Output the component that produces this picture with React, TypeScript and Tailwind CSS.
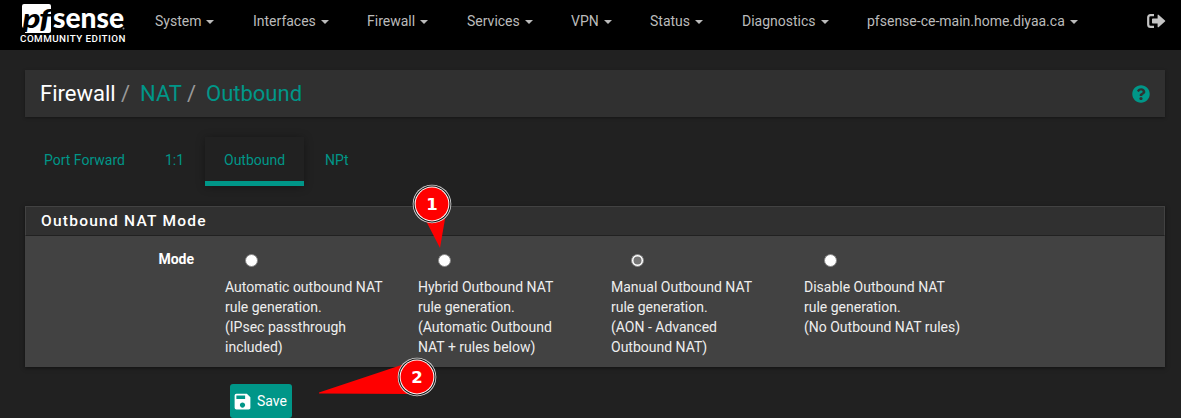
import { FaQuestionCircle } from "react-icons/fa";
import { MdSave } from "react-icons/md";

const menu = [
  { label: "System", width: "w-[98px]" },
  { label: "Interfaces", width: "w-[114px]" },
  { label: "Firewall", width: "w-[100px]" },
  { label: "Services", width: "w-[104px]" },
  { label: "VPN", width: "w-[79px]" },
  { label: "Status", width: "w-[92px]" },
  { label: "Diagnostics", width: "w-[125px]" },
  { label: "pfsense-ce-main.home.diyaa.ca", width: "w-[230px]" },
];

const modes = [
  { lines: ["Automatic outbound NAT", "rule generation.", "(IPsec passthrough", "included)"], checked: false },
  { lines: ["Hybrid Outbound NAT", "rule generation.", "(Automatic Outbound", "NAT + rules below)"], checked: false },
  { lines: ["Manual Outbound NAT", "rule generation.", "(AON - Advanced", "Outbound NAT)"], checked: true },
  { lines: ["Disable Outbound NAT", "rule generation.", "(No Outbound NAT rules)"], checked: false },
];

function Logo() {
  return (
    <svg width="115" height="50" viewBox="0 0 115 50" className="shrink-0">
      <path d="M4 4H29Q31 4 31 6V31Q31 33 29 33H5L6 28H4Q2 28 2 26V6Q2 4 4 4Z" fill="#fff" />
      <text x="2.5" y="27.5" fontFamily="Lato, sans-serif" fontWeight="900" fontStyle="italic" fontSize="27" textLength="18" lengthAdjust="spacingAndGlyphs" fill="#000">p</text>
      <text x="19" y="27.5" fontFamily="Lato, sans-serif" fontWeight="900" fontStyle="italic" fontSize="27" textLength="12" lengthAdjust="spacingAndGlyphs" fill="#000">f</text>
      <text x="33" y="27.5" fontFamily="Lato, sans-serif" fontWeight="900" fontSize="28" textLength="71" lengthAdjust="spacingAndGlyphs" fill="#fff">sense</text>
      <circle cx="103.5" cy="28.5" r="1" fill="#888" />
      <text x="0" y="42" fontFamily="Roboto, sans-serif" fontWeight="500" fontSize="9.8" textLength="105.5" fill="#fff">COMMUNITY EDITION</text>
    </svg>
  );
}

function Radio({ checked }: { checked: boolean }) {
  return (
    <svg width="13" height="13" viewBox="0 0 13 13" className="ml-5 block">
      <circle cx="6.5" cy="6.5" r="6" fill="#fff" stroke="#858585" />
      {checked && <circle cx="6.5" cy="6.5" r="4" fill="#757575" />}
    </svg>
  );
}

function Marker({ n }: { n: number }) {
  return (
    <g>
      <circle cx="20" cy="20" r="19.3" fill="#ddd" />
      <circle cx="20" cy="20" r="18.5" fill="#111" />
      <circle cx="20" cy="20" r="17.4" fill="#fff" />
      <circle cx="20" cy="20" r="16.4" fill="#f00" />
      <text x="20" y="26" textAnchor="middle" fontFamily="DejaVu Sans, sans-serif" fontWeight="bold" fontSize="16.5" fill="#fff">{n}</text>
    </g>
  );
}

export default function App() {
  return (
    <div className="relative h-[418px] w-[1181px] overflow-hidden bg-[#212121] font-['Roboto',sans-serif] text-[14px] leading-5 text-[#eee]">
      <nav className="flex h-[50px] bg-black pl-5 text-[#bbb]">
        <Logo />
        <div className="ml-5 flex pt-[11px]">
          {menu.map((m) => (
            <div key={m.label} className={`${m.width} flex shrink-0 whitespace-nowrap`}>
              {m.label}
              <svg width="8" height="4" viewBox="0 0 8 4" className="ml-[5px] mt-[9px]">
                <path d="M0 0H8L4 4Z" fill="currentColor" />
              </svg>
            </div>
          ))}
        </div>
        <svg width="19" height="14" viewBox="0 0 19 14" className="ml-auto mr-[15px] mt-[14px]">
          <path d="M7 1.2H3.6Q1.2 1.2 1.2 3.6V10.4Q1.2 12.8 3.6 12.8H7" fill="none" stroke="#c4c4c4" strokeWidth="2.2" />
          <path d="M5 5.2Q5 4.4 5.8 4.4H10.6V1.4Q10.6 0 11.8 1L18 6.4Q18.6 7 18 7.6L11.8 13Q10.6 14 10.6 12.6V9.6H5.8Q5 9.6 5 8.8Z" fill="#c4c4c4" />
        </svg>
      </nav>

      <header className="ml-[25px] mt-5 flex h-[47px] w-[1140px] items-center bg-[#303030] pl-[15px] pr-[15px] text-[22px] shadow-[0_1px_3px_rgba(0,0,0,0.35)]">
        <span className="w-[81px] text-white">Firewall</span>
        <span className="w-[19px] text-[#999]">/</span>
        <span className="w-[47px] text-[#009688]">NAT</span>
        <span className="w-[19px] text-[#999]">/</span>
        <span className="text-[#009688]">Outbound</span>
        <FaQuestionCircle className="ml-auto mt-px text-[18px] text-[#009688]" />
      </header>

      <div className="ml-[25px] mt-[20px] flex h-[49px] text-[#009688]">
        <a className="w-[121px] pl-[19px] pt-[13px]">Port Forward</a>
        <a className="w-[59px] pl-[19px] pt-[13px]">1:1</a>
        <a className="w-[99px] border-b-[5px] border-[#009688] bg-[#212121] pl-[19px] pt-[13px] shadow-[0_1px_8px_rgba(0,0,0,0.35)]">Outbound</a>
        <a className="pl-[21px] pt-[13px]">NPt</a>
      </div>

      <section className="ml-[25px] mt-5 h-[161px] w-[1140px] bg-[#424242] shadow-[0_1px_4px_rgba(0,0,0,0.5)]">
        <h2 className="h-[30px] border border-[#424242] border-b-[#212121] bg-[#303030] pl-[15px] pt-[4px] text-[15.5px] font-medium tracking-[1.25px] text-white">Outbound NAT Mode</h2>
        <div className="flex">
          <div className="w-[200px] pr-[31px] pt-[13px] text-right font-bold text-white">Mode</div>
          {modes.map((m) => (
            <label key={m.lines[0]} className="block w-[193px] pt-[18px]">
              <Radio checked={m.checked} />
              <div className="mt-[10px] whitespace-nowrap">
                {m.lines.map((line) => <div key={line}>{line}</div>)}
              </div>
            </label>
          ))}
        </div>
      </section>

      <button className="ml-[230px] mt-[17px] flex h-[34px] w-[62px] items-center rounded-[3px] bg-[#009688] pl-[2px] text-white">
        <MdSave className="text-[21px]" />
        <span className="-mt-px ml-1">Save</span>
      </button>

      <svg width="42" height="66" viewBox="0 0 42 66" className="absolute left-[412px] top-[184px]">
        <path d="M11 31L28 64L34 29Z" fill="#f00" />
        <Marker n={1} />
      </svg>
      <svg width="120" height="42" viewBox="0 0 120 42" className="absolute left-[318px] top-[357px]">
        <path d="M1 35.5V36.5L94 37V4.5Z" fill="#f00" />
        <g transform="translate(79 0)"><Marker n={2} /></g>
      </svg>
    </div>
  );
}
